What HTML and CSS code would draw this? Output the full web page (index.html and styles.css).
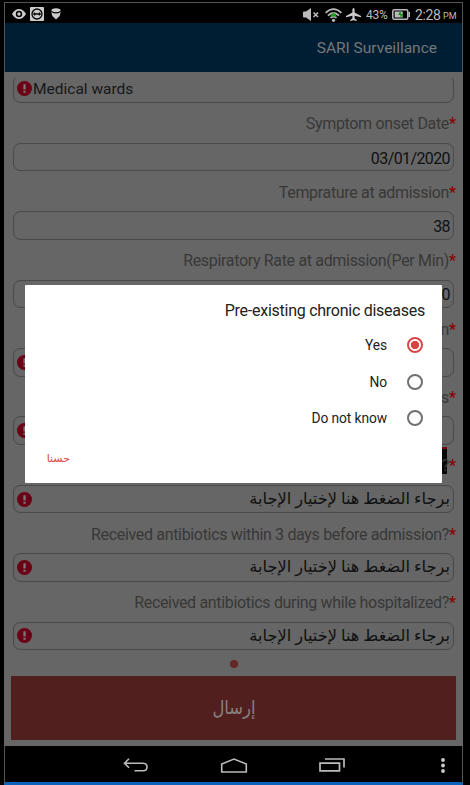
FILE: index.html
```html
<!DOCTYPE html>
<html lang="en">
<head>
<meta charset="utf-8">
<title>SARI Surveillance</title>
<link rel="stylesheet" href="styles.css">
</head>
<body>
<svg class="defs" width="0" height="0"><symbol id="alert" viewBox="0 0 15 15"><circle cx="7.5" cy="7.5" r="7.5" fill="#6c0014"/><path d="M6.4 3.2h2.3v5.4H6.4zM6.4 9.7h2.3v2H6.4z" fill="#777"/></symbol></svg>
<div class="device">
  <header class="status">
    <div class="status-left">
      <svg width="14" height="10" viewBox="0 0 14 10"><path d="M0 5Q3 0 7 0T14 5Q11 10 7 10T0 5Z" fill="#ccc"/><circle cx="7" cy="5" r="3.2" fill="#000"/><circle cx="7" cy="5" r="1.7" fill="#ccc"/></svg>
      <svg width="14" height="14" viewBox="0 0 14 14"><rect width="14" height="14" rx="1" fill="#ccc"/><circle cx="7" cy="7" r="5" fill="#ccc" stroke="#000" stroke-width="1.3"/><path d="M2.800 7l2.300-2v1.300h3.800V5L11.200 7 8.900 9V7.700H5.100V9z" fill="#000"/></svg>
      <svg width="10" height="12" viewBox="0 0 10 12"><path d="M.5 1.500Q5-.8 9.500 1.500V3Q5 5.500.5 3ZM.3 4Q5 7 9.700 4L8.700 8 7 9.500 5 11.500 3 9.500 1.300 8Z" fill="#ccc"/></svg>
    </div>
    <div class="status-right">
      <svg width="16" height="13" viewBox="0 0 16 13"><path d="M0 4.500Q0 3.500 1 3.500H3L8 0V13L3 9.500H1Q0 9.500 0 8.500Z" fill="#bbb"/><path d="M10.500 4.500l4.500 4.500M15 4.500L10.500 9" stroke="#bbb" stroke-width="1.500"/></svg>
      <svg class="wifi" width="17" height="14" viewBox="0 0 17 14"><g fill="none" stroke="#bbb" stroke-width="1.700"><path d="M.6 4.800Q8.500-2.600 16.400 4.800M3 7.600Q8.500 2.400 14 7.600M5.500 10Q8.500 7.200 11.500 10"/></g><circle cx="8.500" cy="12.300" r="1.600" fill="#bbb"/><path d="M8.500 4.200L12 8.500H5z" fill="#18a018"/></svg>
      <svg class="plane" width="15" height="13" viewBox="0 0 15 13"><path d="M6.400 1.200Q7.500-1 8.600 1.200V4.500L15 8V9.300L8.600 7.700V10.500L10.800 12V13L7.500 12.300 4.200 13V12L6.400 10.500V7.700L0 9.300V8L6.400 4.500Z" fill="#ccc"/></svg>
      <span class="percent">43%</span>
      <svg class="battery" width="18" height="11" viewBox="0 0 18 11"><rect x=".8" y=".8" width="15" height="9.400" rx="1.500" fill="none" stroke="#bbb" stroke-width="1.500"/><path d="M16.500 3h1.500v5h-1.500zM2.700 2.500h8v6h-8z" fill="#bbb"/><path d="M8.500 1.500L6 6h2.500l-.5 3.500L11.500 5H9z" fill="#189018"/></svg>
      <span class="clock">2:28</span><span class="meridiem">PM</span>
    </div>
  </header>
  <div class="appbar">SARI Surveillance</div>
  <main class="content">
    <div class="form">
      <div class="field first"><svg class="alert"><use href="#alert"/></svg><span class="ward">Medical wards</span></div>
      <div class="label"><span>Symptom onset Date</span><b>*</b></div>
      <div class="field"><span class="value">03/01/2020</span></div>
      <div class="label"><span>Temprature at admission</span><b>*</b></div>
      <div class="field"><span class="value">38</span></div>
      <div class="label"><span>Respiratory Rate at admission(Per Min)</span><b>*</b></div>
      <div class="field"><span class="value">0</span></div>
      <div class="label"><span>n</span><b>*</b></div>
      <div class="field"><svg class="alert"><use href="#alert"/></svg></div>
      <div class="label"><span>s</span><b>*</b></div>
      <div class="field"><svg class="alert"><use href="#alert"/></svg></div>
      <div class="label"><i class="marker"></i><span>?</span><b>*</b></div>
      <div class="field"><svg class="alert"><use href="#alert"/></svg><span class="arabic" dir="rtl">برجاء الضغط هنا لإختيار الإجابة</span></div>
      <div class="label"><span>Received antibiotics within 3 days before admission?</span><b>*</b></div>
      <div class="field"><svg class="alert"><use href="#alert"/></svg><span class="arabic" dir="rtl">برجاء الضغط هنا لإختيار الإجابة</span></div>
      <div class="label"><span>Received antibiotics during while hospitalized?</span><b>*</b></div>
      <div class="field"><svg class="alert"><use href="#alert"/></svg><span class="arabic" dir="rtl">برجاء الضغط هنا لإختيار الإجابة</span></div>
    </div>
    <div class="page-dot"></div>
    <div class="submit" dir="rtl"><span>إرسال</span></div>
  </main>
  <nav class="nav">
    <svg width="26" height="14" viewBox="0 0 26 14"><path d="M6 .7L1.500 5.200 6 9.700M2 5.200H20Q24 5.200 24 9T20 12.700H11.500" fill="none" stroke="#bbb" stroke-width="1.600"/></svg>
    <svg width="28" height="15" viewBox="0 0 28 15"><path d="M1.700 14V6L14 1 26.300 6V14Z" fill="none" stroke="#bbb" stroke-width="1.600"/></svg>
    <svg width="26" height="14" viewBox="0 0 26 14"><path d="M1 5.200H20.500V12.800H1ZM6 1H25V9.500" fill="none" stroke="#bbb" stroke-width="1.700"/></svg>
    <svg width="4" height="15" viewBox="0 0 4 15"><g fill="#ccc"><circle cx="2" cy="2" r="1.900"/><circle cx="2" cy="7.500" r="1.900"/><circle cx="2" cy="13" r="1.900"/></g></svg>
  </nav>
</div>
<section class="dialog">
  <h1>Pre-existing chronic diseases</h1>
  <div class="option"><span>Yes</span><i class="radio on"></i></div>
  <div class="option"><span>No</span><i class="radio"></i></div>
  <div class="option"><span>Do not know</span><i class="radio"></i></div>
  <div class="ok" dir="rtl">حسنا</div>
</section>
</body>
</html>
```
FILE: styles.css
```css
* { box-sizing: border-box; }
body { margin: 0; width: 470px; height: 785px; overflow: hidden; background: #000; position: relative; font-family: Roboto, "DejaVu Sans", sans-serif; }
svg { display: block; flex: none; }
.defs { position: absolute; }
.device { margin: 2px 7px 0 4px; height: 783px; border: 1px solid #555; border-bottom: 3px solid #0c62b8; display: flex; flex-direction: column; background: #000; }
.status { height: 20px; flex: none; display: flex; justify-content: space-between; color: #bbb; }
.status-left { display: flex; align-items: center; padding: 2px 0 0 7px; gap: 4px; }
.status-left svg:last-child { margin-left: 3px; }
.status-right { display: flex; align-items: center; padding: 3px 5px 0 0; white-space: nowrap; }
.wifi { margin-left: 6px; }
.plane { margin-left: 4px; }
.percent { font-size: 12px; margin-left: 5px; width: 22px; letter-spacing: -.3px; }
.battery { margin-left: 4px; }
.clock { font-size: 14px; margin-left: 5px; width: 26px; letter-spacing: -.4px; }
.meridiem { font-size: 9px; margin: 3px 0 0 2px; width: 14px; }
.appbar { height: 49px; flex: none; background: #001e33; color: #777; font-size: 15.500px; line-height: 51px; text-align: right; padding-right: 25px; }
.content { height: 674px; flex: none; margin: 0 -1px; padding: 6px 7px 0; background: #666; }
.form { height: 574px; overflow: hidden; padding-left: 2px; }
.field { height: 28.500px; border: 1px solid #4b4b4b; border-radius: 7px; box-shadow: inset 0 0 1px #555; margin-right: 2px; display: flex; align-items: center; padding: 0 3px; }
.first { margin-top: -3.500px; }
.alert { width: 15px; height: 15px; }
.ward { font-size: 15.500px; color: #171717; padding-left: 1px; }
.value { margin-left: auto; font-size: 16px; letter-spacing: -.6px; color: #101010; padding-top: 2px; }
.arabic { margin-left: auto; font-size: 16.200px; line-height: 24px; color: #101010; white-space: nowrap; }
.label { height: 39.900px; display: flex; justify-content: flex-end; align-items: center; padding-top: 2px; font-size: 16px; letter-spacing: -.330px; color: #383838; white-space: nowrap; }
.label b { color: #8b0000; font-weight: 500; width: 7px; }
.marker { width: 9px; height: 27px; background: #080808; border-top: 2px solid #800010; margin: -10px -5px 0 0; }
.page-dot { width: 8px; height: 8px; border-radius: 50%; background: #672626; margin: 8px auto 8px; }
.submit { height: 64px; background: #521f1f; color: #898080; text-align: center; font-size: 19px; line-height: 64px; }
.submit span { display: inline-block; transform: scaleX(.86); }
.nav { height: 36px; flex: none; display: flex; align-items: center; padding: 2px 17px 0 118px; }
.nav svg:nth-child(2) { margin-left: 71px; }
.nav svg:nth-child(3) { margin-left: 71px; }
.nav svg:nth-child(4) { margin-left: auto; }
.dialog { position: absolute; left: 25px; top: 285px; width: 417px; height: 198px; background: #fff; border-radius: 1px; padding: 7px 17px 0 22px; color: #222; }
.dialog h1 { margin: 0; font-size: 16px; letter-spacing: -.26px; line-height: 37px; font-weight: 400; text-align: right; height: 35px; }
.option { height: 36.500px; display: flex; justify-content: flex-end; align-items: center; font-size: 13.800px; letter-spacing: -.1px; padding-right: 2.500px; }
.radio { width: 16px; height: 16px; border: 2px solid #707070; border-radius: 50%; margin-left: 19.500px; }
.radio.on { border-color: #d84848; background: radial-gradient(circle, #d84444 3.800px, #fff 4.500px); }
.ok { color: #dd4444; font-size: 11px; text-align: right; width: 23px; margin-top: 15px; white-space: nowrap; }
```
